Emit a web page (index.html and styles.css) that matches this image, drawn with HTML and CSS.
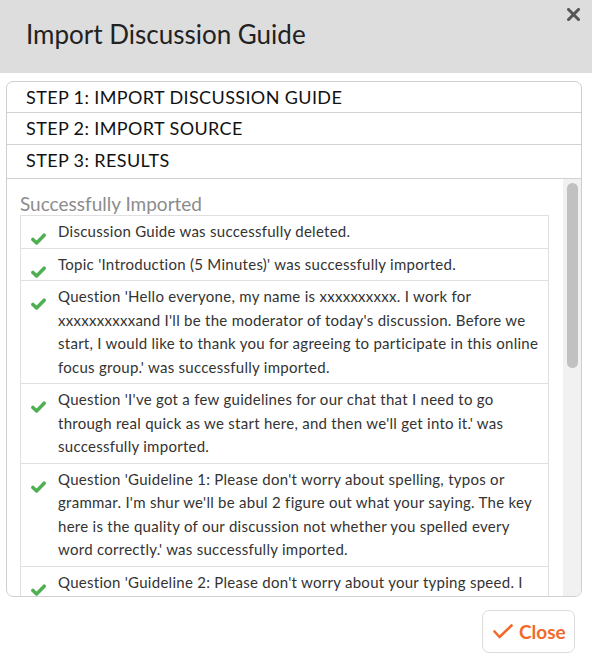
FILE: index.html
```html
<!DOCTYPE html>
<html lang="en">
<head>
<meta charset="utf-8">
<title>Import Discussion Guide</title>
<link rel="stylesheet" href="styles.css">
</head>
<body>
<div class="modal">
  <header class="modal-header">
    <h1 class="modal-title">Import Discussion Guide</h1>
    <button class="dismiss" type="button" aria-label="Close">
      <svg width="13" height="13" viewBox="0 0 13 13"><path d="M1.5 1.5 L11.5 11.5 M11.5 1.5 L1.5 11.5" stroke="#555" stroke-width="3" stroke-linecap="square" fill="none"/></svg>
    </button>
  </header>
  <div class="panel">
    <div class="step step-1">STEP 1: IMPORT DISCUSSION GUIDE</div>
    <div class="step step-2">STEP 2: IMPORT SOURCE</div>
    <div class="step step-3">STEP 3: RESULTS</div>
    <div class="results">
      <div class="results-content">
        <h2 class="results-title">Successfully Imported</h2>
        <ul class="log">
          <li class="log-item"><span class="ok-wrap"><svg class="ok" width="15" height="12" viewBox="0 0 15 12"><polyline points="1.9,6.4 5.6,10 13.2,2.2" fill="none" stroke="#4fb052" stroke-width="3.5" stroke-linecap="round" stroke-linejoin="round"/></svg></span><span class="log-text">Discussion Guide was successfully deleted.</span></li>
          <li class="log-item"><span class="ok-wrap"><svg class="ok" width="15" height="12" viewBox="0 0 15 12"><polyline points="1.9,6.4 5.6,10 13.2,2.2" fill="none" stroke="#4fb052" stroke-width="3.5" stroke-linecap="round" stroke-linejoin="round"/></svg></span><span class="log-text">Topic 'Introduction (5 Minutes)' was successfully imported.</span></li>
          <li class="log-item"><span class="ok-wrap"><svg class="ok" width="15" height="12" viewBox="0 0 15 12"><polyline points="1.9,6.4 5.6,10 13.2,2.2" fill="none" stroke="#4fb052" stroke-width="3.5" stroke-linecap="round" stroke-linejoin="round"/></svg></span><span class="log-text">Question 'Hello everyone, my name is xxxxxxxxxx. I work for xxxxxxxxxxand I'll be the moderator of today's discussion. Before we start, I would like to thank you for agreeing to participate in this online focus group.' was successfully imported.</span></li>
          <li class="log-item"><span class="ok-wrap"><svg class="ok" width="15" height="12" viewBox="0 0 15 12"><polyline points="1.9,6.4 5.6,10 13.2,2.2" fill="none" stroke="#4fb052" stroke-width="3.5" stroke-linecap="round" stroke-linejoin="round"/></svg></span><span class="log-text">Question 'I've got a few guidelines for our chat that I need to go through real quick as we start here, and then we'll get into it.' was successfully imported.</span></li>
          <li class="log-item"><span class="ok-wrap"><svg class="ok" width="15" height="12" viewBox="0 0 15 12"><polyline points="1.9,6.4 5.6,10 13.2,2.2" fill="none" stroke="#4fb052" stroke-width="3.5" stroke-linecap="round" stroke-linejoin="round"/></svg></span><span class="log-text">Question 'Guideline 1: Please don't worry about spelling, typos or grammar. I'm shur we'll be abul 2 figure out what your saying. The key here is the quality of our discussion not whether you spelled every word correctly.' was successfully imported.</span></li>
          <li class="log-item"><span class="ok-wrap"><svg class="ok" width="15" height="12" viewBox="0 0 15 12"><polyline points="1.9,6.4 5.6,10 13.2,2.2" fill="none" stroke="#4fb052" stroke-width="3.5" stroke-linecap="round" stroke-linejoin="round"/></svg></span><span class="log-text">Question 'Guideline 2: Please don't worry about your typing speed. I know some of us type faster than others.' was successfully imported.</span></li>
        </ul>
      </div>
      <div class="scrollbar"><div class="scrollbar-thumb"></div></div>
    </div>
  </div>
  <footer class="modal-footer">
    <button class="btn-close" type="button">
      <svg width="20" height="15" viewBox="0 0 20 15"><polyline points="1.5,7.5 6.5,13 18.5,1.5" fill="none" stroke="#f26a2b" stroke-width="2.6" stroke-linecap="round" stroke-linejoin="round"/></svg>
      <span>Close</span>
    </button>
  </footer>
</div>
</body>
</html>
```

FILE: styles.css
```css
* { box-sizing: border-box; }

html, body {
  margin: 0;
  padding: 0;
  background: #ffffff;
}

body {
  font-family: Lato, "Open Sans", "Liberation Sans", sans-serif;
  color: #333333;
  width: 592px;
  height: 663px;
  overflow: hidden;
}

.modal {
  display: flex;
  flex-direction: column;
  width: 592px;
  height: 663px;
}

.modal-header {
  display: flex;
  justify-content: space-between;
  align-items: flex-start;
  height: 73px;
  background: #dddddd;
}

.modal-title {
  margin: 0;
  padding: 19px 0 0 26px;
  font-size: 26px;
  line-height: 31px;
  font-weight: 400;
  color: #222222;
}

.dismiss {
  margin: 8px 12px 0 0;
  padding: 0;
  border: 0;
  background: none;
  width: 13px;
  height: 13px;
  display: block;
}

.dismiss svg { display: block; }

.panel {
  margin: 8px 10px 0 6px;
  border: 1px solid #cfcfcf;
  border-radius: 7px;
  overflow: hidden;
  display: flex;
  flex-direction: column;
}

.step {
  padding: 4px 19px;
  font-size: 18px;
  line-height: 22px;
  letter-spacing: 0.38px;
  color: #111111;
  border-bottom: 1px solid #d2d2d2;
}

.step-2 {
  padding-bottom: 5px;
}

.step-3 {
  padding-bottom: 7px;
}

.results {
  display: flex;
  height: 417px;
}

.results-content {
  flex: 1;
  overflow: hidden;
  padding: 13px 14px 0 13px;
}

.results-title {
  margin: 0;
  font-size: 19px;
  line-height: 23px;
  font-weight: 400;
  color: #8c8c8c;
}

.log {
  list-style: none;
  margin: 0;
  padding: 0;
  border: 1px solid #e0e0e0;
  border-bottom: 0;
}

.log-item {
  display: flex;
  align-items: flex-start;
  gap: 12px;
  padding: 4px 9px 4px 10px;
  border-bottom: 1px solid #e0e0e0;
}

.ok-wrap {
  flex: none;
  display: block;
  width: 15px;
  height: 23px;
}

.ok {
  display: block;
  margin-top: 13px;
}

.log-text {
  flex: 1;
  font-size: 15px;
  line-height: 23.5px;
  letter-spacing: 0.27px;
  color: #333333;
}

.scrollbar {
  flex: none;
  width: 18px;
  background: #f1f1f1;
  padding: 4px 3px 0 3px;
}

.scrollbar-thumb {
  width: 11px;
  height: 185px;
  margin-left: 1px;
  background: #c1c1c1;
  border-radius: 6px;
}

.modal-footer {
  display: flex;
  justify-content: flex-end;
  padding: 13px 17px 0 0;
}

.btn-close {
  display: flex;
  align-items: center;
  gap: 6px;
  width: 93px;
  height: 43px;
  padding: 0 0 0 10px;
  background: #ffffff;
  border: 1px solid #dcdcdc;
  border-radius: 7px;
  font-family: Lato, "Open Sans", "Liberation Sans", sans-serif;
  font-size: 19px;
  font-weight: 700;
  color: #f26a2b;
}

.btn-close svg { display: block; flex: none; }
```
